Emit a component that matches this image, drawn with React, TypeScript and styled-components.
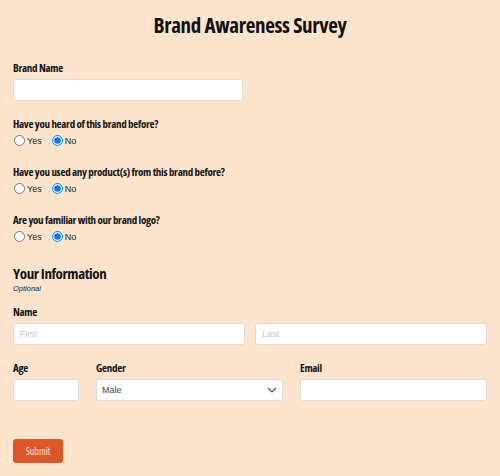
import React from "react";
import styled, { createGlobalStyle } from "styled-components";

const Global = createGlobalStyle`
  html, body { margin: 0; padding: 0; background: #fde5cd; }
  body { font-family: "Liberation Sans", Arial, sans-serif; }
  * { box-sizing: border-box; }
`;

const Page = styled.form`
  width: 500px;
  min-height: 476px;
  padding: 12px 13px 0;
  background: #fde5cd;
`;

const Title = styled.h1`
  margin: 0 0 22px;
  font-family: "Open Sans", sans-serif;
  font-stretch: 75%;
  font-weight: 700;
  font-size: 21px;
  letter-spacing: -0.3px;
  line-height: 26px;
  text-align: center;
  color: #111;
`;

const Field = styled.div<{ $mb?: number }>`
  display: flex;
  flex-direction: column;
  margin-bottom: ${(p) => p.$mb ?? 0}px;
`;

const Label = styled.label`
  font-family: "Open Sans", sans-serif;
  font-stretch: 75%;
  font-weight: 700;
  font-size: 11px;
  letter-spacing: -0.3px;
  line-height: 16px;
  color: #111;
  margin-bottom: 3px;
`;

const Question = styled(Label)`
  margin-bottom: 1px;
`;

const TextInput = styled.input<{ $w?: number }>`
  width: ${(p) => (p.$w ? `${p.$w}px` : "100%")};
  height: 22px;
  border: 1px solid #dcdcdc;
  border-radius: 3px;
  background: #fff;
  padding: 0 6px;
  font-family: "Liberation Sans", Arial, sans-serif;
  font-size: 9px;
  color: #444;
  outline: none;
  &::placeholder { color: #c4c4c4; }
`;

const RadioRow = styled.div`
  display: flex;
  align-items: center;
  gap: 9px;
  height: 15px;
`;

const RadioLabel = styled.label`
  display: flex;
  align-items: center;
  gap: 2px;
  font-size: 9px;
  color: #222;
`;

const Radio = styled.input`
  width: 11px;
  height: 11px;
  margin: 0 0 0 1px;
`;

const SectionTitle = styled.h2`
  margin: 0;
  font-family: "Open Sans", sans-serif;
  font-stretch: 75%;
  font-weight: 700;
  font-size: 15px;
  letter-spacing: -0.4px;
  line-height: 20px;
  color: #111;
`;

const Note = styled.div`
  font-style: italic;
  font-size: 7.5px;
  line-height: 10px;
  color: #222;
  margin: 1px 0 10px;
`;

const Pair = styled.div`
  display: grid;
  grid-template-columns: 1fr 1fr;
  gap: 10px;
`;

const Triple = styled.div`
  display: grid;
  grid-template-columns: 66px 1fr 1fr;
  gap: 17px;
`;

const SelectWrap = styled.div`
  position: relative;
  height: 22px;
  border: 1px solid #dcdcdc;
  border-radius: 3px;
  background: #fff;
  display: flex;
  align-items: center;
  padding: 0 5px;
  font-size: 9px;
  color: #444;
`;

const Chevron = styled.svg`
  position: absolute;
  right: 5px;
  top: 6px;
`;

const Submit = styled.button`
  margin-top: 38px;
  width: 50px;
  height: 24px;
  border: none;
  border-radius: 3px;
  background: #dd5628;
  color: #fde8de;
  font-family: "Open Sans", sans-serif;
  font-stretch: 75%;
  font-size: 10px;
  padding: 0;
`;

const questions = [
  "Have you heard of this brand before?",
  "Have you used any product(s) from this brand before?",
  "Are you familiar with our brand logo?",
];

export default function App() {
  return (
    <>
      <Global />
      <Page onSubmit={(e) => e.preventDefault()}>
        <Title>Brand Awareness Survey</Title>
        <Field $mb={15}>
          <Label>Brand Name</Label>
          <TextInput $w={230} />
        </Field>
        {questions.map((q, i) => (
          <Field key={q} $mb={i === 2 ? 19 : 16}>
            <Question>{q}</Question>
            <RadioRow>
              <RadioLabel>
                <Radio type="radio" name={`q${i}`} /> Yes
              </RadioLabel>
              <RadioLabel>
                <Radio type="radio" name={`q${i}`} defaultChecked /> No
              </RadioLabel>
            </RadioRow>
          </Field>
        ))}
        <SectionTitle>Your Information</SectionTitle>
        <Note>Optional</Note>
        <Field $mb={15}>
          <Label>Name</Label>
          <Pair>
            <TextInput placeholder="First" />
            <TextInput placeholder="Last" />
          </Pair>
        </Field>
        <Triple>
          <Field>
            <Label>Age</Label>
            <TextInput />
          </Field>
          <Field>
            <Label>Gender</Label>
            <SelectWrap>
              Male
              <Chevron width="10" height="8" viewBox="0 0 10 8">
                <path d="M1 2 L5 6 L9 2" fill="none" stroke="#555" strokeWidth="1.2" />
              </Chevron>
            </SelectWrap>
          </Field>
          <Field>
            <Label>Email</Label>
            <TextInput />
          </Field>
        </Triple>
        <Submit type="submit">Submit</Submit>
      </Page>
    </>
  );
}
